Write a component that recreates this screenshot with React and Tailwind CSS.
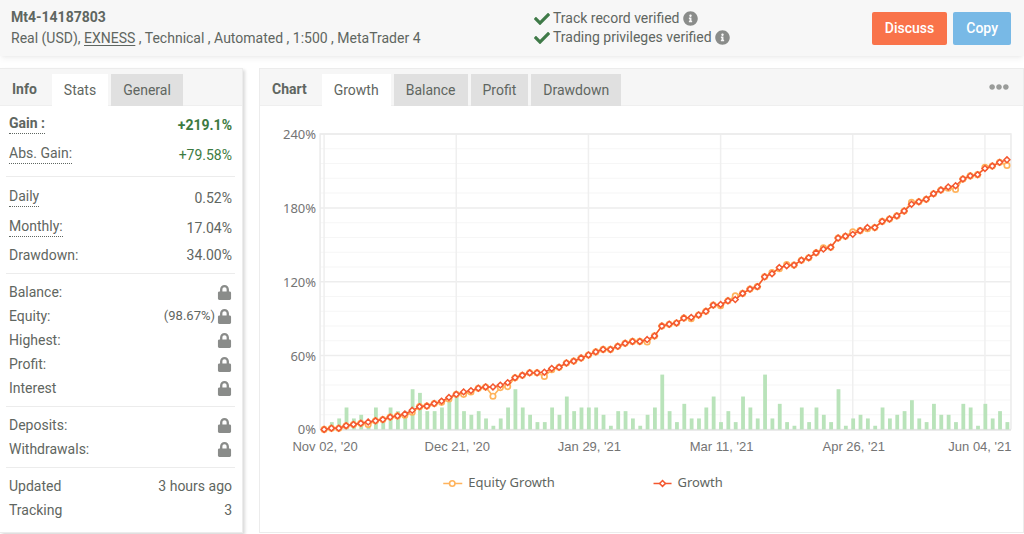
import { useState } from 'react'
import { FaCheck, FaInfoCircle, FaLock, FaEllipsisH } from 'react-icons/fa'

const ACCOUNT_CHECKS = ['Track record verified', 'Trading privileges verified']

const STAT_GROUPS = [
  [
    { label: 'Gain :', value: '+219.1%', hint: true, bold: true, positive: true },
    { label: 'Abs. Gain:', value: '+79.58%', hint: true, positive: true },
  ],
  [
    { label: 'Daily', value: '0.52%', hint: true },
    { label: 'Monthly:', value: '17.04%', hint: true },
    { label: 'Drawdown:', value: '34.00%' },
  ],
  [
    { label: 'Balance:', locked: true },
    { label: 'Equity:', note: '(98.67%)', locked: true },
    { label: 'Highest:', locked: true },
    { label: 'Profit:', locked: true },
    { label: 'Interest', locked: true },
  ],
  [
    { label: 'Deposits:', locked: true },
    { label: 'Withdrawals:', locked: true },
  ],
  [
    { label: 'Updated', value: '3 hours ago' },
    { label: 'Tracking', value: '3' },
  ],
]

const GROWTH = [
  0, 1, 1, 3, 4, 5, 6, 7, 8, 10, 11, 12.5, 15.5, 18.5, 19, 21, 23, 26, 28.5, 30.5,
  31.5, 33.5, 34.5, 34.5, 36, 38, 42, 44, 46, 46, 46.5, 49.5, 50.5, 54, 55.5, 58, 60.5, 63, 65, 65,
  67.5, 70, 71.5, 71.5, 73, 76, 84, 85.5, 86.5, 90.5, 91, 93, 96, 101, 101.5, 104.5, 105.5, 110.5, 114, 116,
  124, 126.5, 131.5, 133, 133.5, 137.5, 139.5, 143.5, 146.5, 148, 155.5, 157, 158.5, 161.5, 164, 164, 169, 171, 173.5, 177.5,
  183, 185, 187, 191.5, 194.5, 197, 198, 203.5, 206, 207, 212, 214, 217, 219.1,
]

// equity only differs from growth on these days
const EQUITY_OVERRIDES = {
  6: 4, 11: 11.5, 12: 14, 16: 22, 17: 24.8, 19: 28.5, 20: 30.5, 23: 27, 24: 34, 25: 34.8,
  30: 43, 31: 48.5, 44: 71, 50: 90, 54: 100.5, 56: 108.5, 61: 127.5, 62: 130.5, 63: 134, 68: 147.5,
  72: 160.5, 74: 163, 80: 184.5, 85: 196, 86: 195, 90: 213, 93: 214.5,
}
const EQUITY = GROWTH.map((v, i) => EQUITY_OVERRIDES[i] ?? v)

const VOLUME = [
  0, 2, 3, 6, 3, 4, 2, 6, 3, 6, 5, 5, 11, 10, 5, 5, 6, 9, 9, 5,
  4, 5, 3, 1, 3, 6, 11, 6, 4, 2, 2, 6, 4, 9, 5, 6, 6, 6, 4, 1,
  5, 5, 3, 1, 4, 6, 15, 5, 2, 7, 3, 3, 6, 9, 2, 5, 2, 9, 6, 3,
  15, 3, 7, 2, 1, 6, 2, 6, 4, 2, 11, 1, 3, 4, 3, 1, 6, 3, 4, 5,
  8, 3, 2, 7, 4, 4, 2, 7, 6, 1, 7, 3, 5, 2,
]

const DATES = ["Nov 02, '20", "Dec 21, '20", "Jan 29, '21", "Mar 11, '21", "Apr 26, '21", "Jun 04, '21"]

// chart geometry
const LEFT = 60
const RIGHT = 750
const TOP = 28
const BOTTOM = 323
const FIRST = 64
const STEP = 132 / 18
const MAX = 240
// keeps the last date label inside the plot
const LABEL_MAX = 719

const px = (i) => FIRST + i * STEP
const py = (v) => BOTTOM - (v / MAX) * (BOTTOM - TOP)
const toPoints = (values) => values.map((v, i) => `${px(i).toFixed(1)},${py(v).toFixed(1)}`).join(' ')

function Diamond({ x, y }) {
  return (
    <path
      d={`M${x} ${y - 2.9}L${x + 2.9} ${y}L${x} ${y + 2.9}L${x - 2.9} ${y}Z`}
      fill="#fff"
      stroke="#f4572f"
      strokeWidth="1.5"
    />
  )
}

function GrowthChart() {
  const minor = Array.from({ length: 21 }, (_, i) => i * 12)
  return (
    <svg viewBox="0 0 762 400" className="block w-full" role="img" aria-label="Growth chart">
      {minor.map((v) => (
        <line
          key={v}
          x1={LEFT}
          x2={RIGHT}
          y1={py(v)}
          y2={py(v)}
          stroke={v % 60 ? '#f6f6f6' : '#ededed'}
          strokeWidth={v % 60 ? 1 : 1.5}
        />
      ))}
      {DATES.map((d, i) => (
        <line key={d} x1={px(i * 18)} x2={px(i * 18)} y1={TOP} y2={BOTTOM} stroke="#efefef" strokeWidth="1.5" />
      ))}
      <path d={`M${LEFT} ${BOTTOM}V${TOP}H${RIGHT}V${BOTTOM}`} fill="none" stroke="#ebebeb" strokeWidth="1.5" />
      <line x1={LEFT} x2={RIGHT} y1={BOTTOM + 0.5} y2={BOTTOM + 0.5} stroke="#dcdcdc" />

      {VOLUME.map((v, i) => (
        <rect key={i} x={px(i) - 1.5} y={BOTTOM - v * 3.65} width="3.8" height={v * 3.65} fill="#b9e3ba" />
      ))}

      <polyline points={toPoints(EQUITY)} fill="none" stroke="#ffb35c" strokeWidth="1.6" />
      {EQUITY.map((v, i) => (
        <circle key={i} cx={px(i)} cy={py(v)} r="2.7" fill="#fff" stroke="#ffb35c" strokeWidth="1.7" />
      ))}
      <polyline points={toPoints(GROWTH)} fill="none" stroke="#f4572f" strokeWidth="1.4" />
      {GROWTH.map((v, i) => (
        <Diamond key={i} x={px(i)} y={py(v)} />
      ))}

      <g className="fill-[#747474] font-['Noto_Sans',sans-serif] text-[13px]" textAnchor="end">
        {[0, 60, 120, 180, 240].map((v) => (
          <text key={v} x="56" y={py(v) + 5}>{v}%</text>
        ))}
      </g>
      <g className="fill-[#747474] font-['Liberation_Sans',Arial,sans-serif] text-[13px]" textAnchor="middle">
        {DATES.map((d, i) => (
          <text key={d} x={Math.min(px(i * 18) + 1, LABEL_MAX)} y="345">{d}</text>
        ))}
      </g>

      <g className="fill-[#5f6661] font-['Noto_Sans',sans-serif] text-[13px]">
        <line x1="183" x2="202" y1="377" y2="377" stroke="#ffb35c" strokeWidth="1.5" />
        <circle cx="192" cy="377" r="2.7" fill="#fff" stroke="#ffb35c" strokeWidth="1.6" />
        <text x="208" y="381">Equity Growth</text>
        <line x1="393" x2="411" y1="377" y2="377" stroke="#f4572f" strokeWidth="1.5" />
        <Diamond x={402} y={377} />
        <text x="417" y="381">Growth</text>
      </g>
    </svg>
  )
}

function TabBar({ title, tabs, active, onChange, children }) {
  return (
    <div className="flex h-[37px] items-end border-b border-[#efefef] bg-[#f6f6f6]">
      <h2 className="pr-[15px] pl-3 text-sm leading-8 font-bold">{title}</h2>
      <div className="-mb-px flex gap-[3px]" role="tablist">
        {tabs.map((tab) => (
          <button
            key={tab}
            type="button"
            role="tab"
            aria-selected={active === tab}
            onClick={() => onChange(tab)}
            className={`h-8 px-3 text-sm ${active === tab ? 'bg-white' : 'bg-[#e0e0e0]'}`}
          >
            {tab}
          </button>
        ))}
      </div>
      {children}
    </div>
  )
}

function StatRow({ stat }) {
  return (
    <div className={`flex items-center justify-between ${stat.hint ? 'h-[30px]' : 'h-6'} ${stat.bold ? 'font-bold' : ''}`}>
      <dt className={stat.hint ? 'mb-0.5 border-b border-dotted border-[#5f6661] pb-0.5 leading-4' : ''}>{stat.label}</dt>
      <dd className={`flex items-center gap-0.5 ${stat.positive ? 'text-[#3c7a41]' : ''}`}>
        {stat.note && <span className="text-[13px]">{stat.note}</span>}
        {stat.value}
        {stat.locked && <FaLock size={15} className="text-[#8a8c8a]" aria-label="Private" />}
      </dd>
    </div>
  )
}

export default function App() {
  const [infoTab, setInfoTab] = useState('Stats')
  const [chartTab, setChartTab] = useState('Growth')

  return (
    <div className="bg-white font-[Roboto,sans-serif] text-sm text-[#5f6661]">
      {/* Account header */}
      <header className="flex h-14 items-center bg-[#f7f7f7] pr-[13px] pl-[11px] shadow-md shadow-black/5">
        <div className="w-[523px] shrink-0 pb-px leading-[21px]">
          <h1 className="font-bold">Mt4-14187803</h1>
          <p>
            Real (USD), <a href="#exness" className="underline underline-offset-2">EXNESS</a> , Technical , Automated , 1:500 , MetaTrader 4
          </p>
        </div>
        <ul className="grow leading-[19px]">
          {ACCOUNT_CHECKS.map((text) => (
            <li key={text} className="flex items-center gap-[3px]">
              <FaCheck size={16} className="text-[#3f7a48]" />
              {text}
              <FaInfoCircle size={15} className="text-[#8a8c8a]" />
            </li>
          ))}
        </ul>
        <div className="flex gap-1.5 font-medium text-white">
          <button type="button" className="h-[33px] rounded-xs bg-[#f9734a] px-[13px]">Discuss</button>
          <button type="button" className="h-[33px] rounded-xs bg-[#78b9e6] px-[13px]">Copy</button>
        </div>
      </header>

      <main className="mt-3 flex gap-4 pb-0.5">
        {/* Info */}
        <section className="w-[243px] shrink-0 border-y border-r border-[#ececec] shadow-[2px_2px_3px_rgba(0,0,0,0.15)]">
          <TabBar title="Info" tabs={['Stats', 'General']} active={infoTab} onChange={setInfoTab} />
          <div className="pt-1 pr-[7px] pb-1 pl-1.5">
            {STAT_GROUPS.map((group, i) => (
              <dl key={i} className="border-b border-[#ececec] px-[3px] py-1.5 first:pt-0 last:border-b-0">
                {group.map((stat) => (
                  <StatRow key={stat.label} stat={stat} />
                ))}
              </dl>
            ))}
          </div>
        </section>

        {/* Chart */}
        <section className="min-w-0 grow border border-[#ececec]">
          <TabBar title="Chart" tabs={['Growth', 'Balance', 'Profit', 'Drawdown']} active={chartTab} onChange={setChartTab}>
            <button type="button" aria-label="More options" className="mr-3.5 mb-2 ml-auto text-[#9a9c9a]">
              <FaEllipsisH size={20} />
            </button>
          </TabBar>
          <GrowthChart />
        </section>
      </main>
    </div>
  )
}
